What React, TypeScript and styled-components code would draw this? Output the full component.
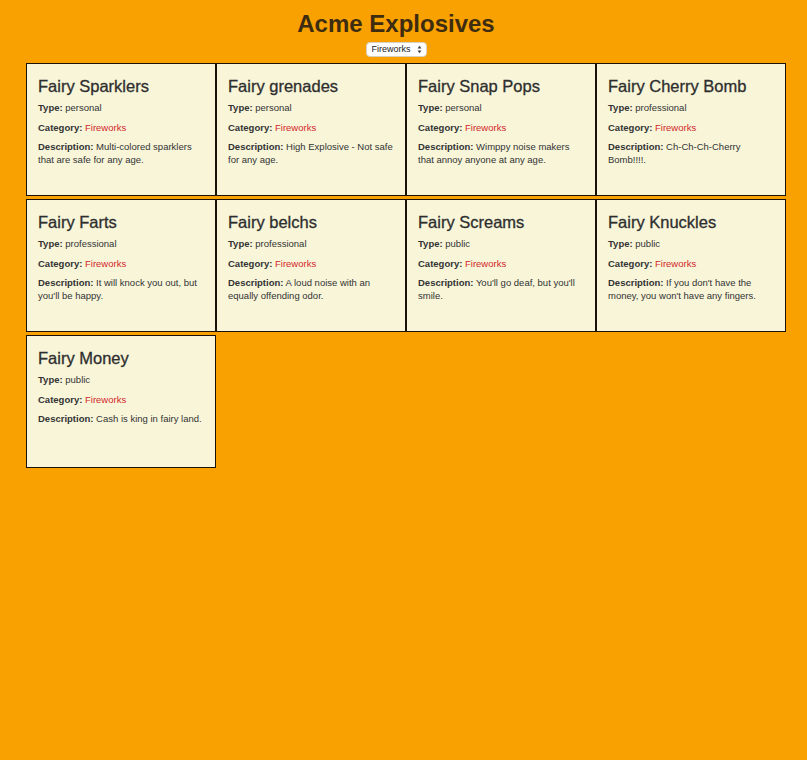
import React, { useState } from "react";
import styled, { createGlobalStyle } from "styled-components";

const GlobalStyle = createGlobalStyle`
  html, body {
    margin: 0;
    padding: 0;
    background: #f9a100;
    min-height: 760px;
  }
  body {
    font-family: "Liberation Sans", Arial, Helvetica, sans-serif;
    color: #333;
  }
`;

type Product = {
  name: string;
  type: string;
  category: string;
  description: string;
};

const products: Product[] = [
  { name: "Fairy Sparklers", type: "personal", category: "Fireworks", description: "Multi-colored sparklers that are safe for any age." },
  { name: "Fairy grenades", type: "personal", category: "Fireworks", description: "High Explosive - Not safe for any age." },
  { name: "Fairy Snap Pops", type: "personal", category: "Fireworks", description: "Wimppy noise makers that annoy anyone at any age." },
  { name: "Fairy Cherry Bomb", type: "professional", category: "Fireworks", description: "Ch-Ch-Ch-Cherry Bomb!!!!." },
  { name: "Fairy Farts", type: "professional", category: "Fireworks", description: "It will knock you out, but you'll be happy." },
  { name: "Fairy belchs", type: "professional", category: "Fireworks", description: "A loud noise with an equally offending odor." },
  { name: "Fairy Screams", type: "public", category: "Fireworks", description: "You'll go deaf, but you'll smile." },
  { name: "Fairy Knuckles", type: "public", category: "Fireworks", description: "If you don't have the money, you won't have any fingers." },
  { name: "Fairy Money", type: "public", category: "Fireworks", description: "Cash is king in fairy land." },
];

const Page = styled.div`
  min-height: 760px;
  background: #f9a100;
`;

const Header = styled.header`
  width: 792px;
  display: flex;
  flex-direction: column;
  align-items: center;
  padding-top: 10px;
`;

const Title = styled.h1`
  margin: 0;
  font-size: 24px;
  line-height: 28px;
  font-weight: bold;
  color: #3d2c10;
`;

const SelectWrap = styled.div`
  position: relative;
  margin-top: 4px;
  display: inline-flex;
`;

const Select = styled.select`
  appearance: none;
  -webkit-appearance: none;
  width: 61px;
  height: 15px;
  padding: 0 0 0 5px;
  border: 1px solid #d8d0c0;
  border-radius: 4px;
  background: #fff;
  font-family: "Liberation Sans", Arial, sans-serif;
  font-size: 9px;
  color: #222;
  line-height: 13px;
  outline: none;
`;

const Arrows = styled.svg`
  position: absolute;
  right: 5px;
  top: 3px;
  pointer-events: none;
`;

const Grid = styled.div`
  display: grid;
  grid-template-columns: repeat(4, 190px);
  row-gap: 3px;
  margin: 6px 0 0 26px;
`;

const Card = styled.div`
  box-sizing: border-box;
  height: 133px;
  padding: 11px 10px 0 11px;
  background: #f8f5d9;
  border: 1px solid #1a1208;
`;

const CardTitle = styled.h2`
  margin: 0 0 4px;
  font-size: 16.5px;
  line-height: 22px;
  font-weight: normal;
  color: #2e2e2e;
  -webkit-text-stroke: 0.3px #2e2e2e;
`;

const Field = styled.p`
  margin: 0 0 6.5px;
  font-size: 9.5px;
  line-height: 13px;
  color: #333;
`;

const Label = styled.strong`
  font-weight: bold;
`;

const Category = styled.span`
  color: #d3262a;
`;

export default function App() {
  const [cat, setCat] = useState("Fireworks");
  return (
    <Page>
      <GlobalStyle />
      <Header>
        <Title>Acme Explosives</Title>
        <SelectWrap>
          <Select value={cat} onChange={(e) => setCat(e.target.value)}>
            <option value="Fireworks">Fireworks</option>
            <option value="Explosives">Explosives</option>
          </Select>
          <Arrows width="5" height="9" viewBox="0 0 5 9">
            <path d="M0.5 3.5 L2.5 0.8 L4.5 3.5 Z" fill="#444" />
            <path d="M0.5 5.5 L2.5 8.2 L4.5 5.5 Z" fill="#444" />
          </Arrows>
        </SelectWrap>
      </Header>
      <Grid>
        {products.map((p) => (
          <Card key={p.name}>
            <CardTitle>{p.name}</CardTitle>
            <Field>
              <Label>Type:</Label> {p.type}
            </Field>
            <Field>
              <Label>Category:</Label> <Category>{p.category}</Category>
            </Field>
            <Field>
              <Label>Description:</Label> {p.description}
            </Field>
          </Card>
        ))}
      </Grid>
    </Page>
  );
}
